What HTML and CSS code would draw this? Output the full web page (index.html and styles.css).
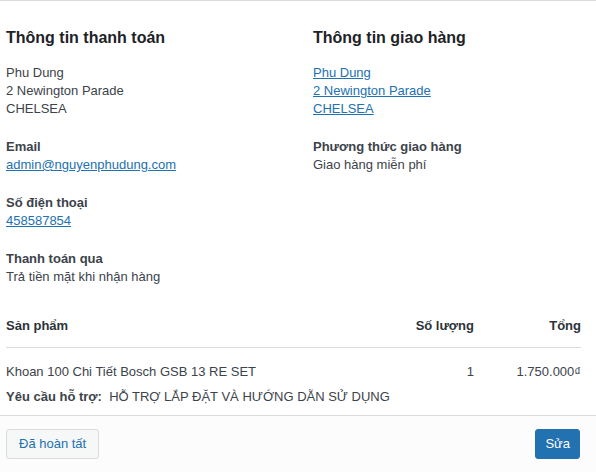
FILE: index.html
```html
<!DOCTYPE html>
<html lang="vi">
<head>
    <meta charset="UTF-8">
    <title>Xem trước đơn hàng</title>
    <link rel="stylesheet" href="styles.css">
</head>
<body>
    <div class="modal">
        <header class="modal-head">
            <span class="modal-close"></span>
        </header>
        <article class="modal-body">
            <div class="addresses">
                <div class="address">
                    <h2>Thông tin thanh toán</h2>
                    <p>Phu Dung<br>2 Newington Parade<br>CHELSEA</p>
                    <strong>Email</strong>
                    <p><a href="#">admin@nguyenphudung.com</a></p>
                    <strong>Số điện thoại</strong>
                    <p><a href="#">458587854</a></p>
                    <strong>Thanh toán qua</strong>
                    <p>Trả tiền mặt khi nhận hàng</p>
                </div>
                <div class="address">
                    <h2>Thông tin giao hàng</h2>
                    <p><a href="#">Phu Dung<br>2 Newington Parade<br>CHELSEA</a></p>
                    <strong>Phương thức giao hàng</strong>
                    <p>Giao hàng miễn phí</p>
                </div>
            </div>
            <table class="items">
                <thead>
                    <tr>
                        <th class="col-product">Sản phẩm</th>
                        <th class="col-qty">Số lượng</th>
                        <th class="col-total">Tổng</th>
                    </tr>
                </thead>
                <tbody>
                    <tr>
                        <td class="col-product">
                            Khoan 100 Chi Tiết Bosch GSB 13 RE SET
                            <div class="meta"><b>Yêu cầu hỗ trợ:</b>&nbsp; HỖ TRỢ LẮP ĐẶT VÀ HƯỚNG DẪN SỬ DỤNG</div>
                        </td>
                        <td class="col-qty">1</td>
                        <td class="col-total">1.750.000₫</td>
                    </tr>
                </tbody>
            </table>
        </article>
        <footer class="modal-foot">
            <a href="#" class="button">Đã hoàn tất</a>
            <a href="#" class="button button-primary">Sửa</a>
        </footer>
    </div>
</body>
</html>
```

FILE: styles.css
```css
*{
    margin: 0;
    padding: 0;
    box-sizing: border-box;
}
body{
    font-family: "Liberation Sans", Arial, sans-serif;
    font-size: 13px;
    line-height: 18px;
    color: #3c434a;
    background: #ffffff;
}
a{
    color: #2271b1;
}
.modal{
    width: 596px;
    height: 472px;
    display: flex;
    flex-direction: column;
    overflow: hidden;
}
.modal-head{
    height: 7px;
    background: #fcfcfc;
    border-bottom: 1px solid #dcdcde;
    display: flex;
    justify-content: flex-end;
}
.modal-close{
    width: 50px;
    border-left: 1px solid #dcdcde;
}
.modal-body{
    flex: 1;
    padding: 26px 15px 0 6px;
}
.addresses{
    display: grid;
    grid-template-columns: 307px 1fr;
}
.address h2{
    font-size: 16px;
    line-height: 22px;
    font-weight: 600;
    color: #1d2327;
    margin-bottom: 15px;
}
.address strong{
    display: block;
    font-weight: 600;
}
.address p{
    margin-bottom: 20px;
}
.items{
    width: 100%;
    border-collapse: collapse;
    table-layout: fixed;
}
.items th{
    font-weight: 600;
    text-align: left;
    padding: 11px 0 12px;
    border-bottom: 1px solid #dcdcde;
    color: #2c3338;
}
.items td{
    padding: 15px 0 9px;
    vertical-align: top;
}
.items .col-qty{
    text-align: right;
    width: 90px;
}
.items .col-total{
    text-align: right;
    width: 107px;
}
.meta{
    margin-top: 7px;
    white-space: nowrap;
}
.meta b{
    font-weight: 600;
}
.modal-foot{
    background: #fcfcfc;
    border-top: 1px solid #dcdcde;
    padding: 13px 16px 13px 6px;
    display: flex;
    justify-content: space-between;
    height: 57px;
}
.button{
    display: inline-block;
    height: 30px;
    line-height: 28px;
    padding: 0 12px;
    border: 1px solid #dcdcde;
    border-radius: 3px;
    background: #f6f7f7;
    color: #2271b1;
    text-decoration: none;
}
.button-primary{
    padding: 0 9px;
    background: #2271b1;
    border-color: #2271b1;
    color: #ffffff;
}
```
